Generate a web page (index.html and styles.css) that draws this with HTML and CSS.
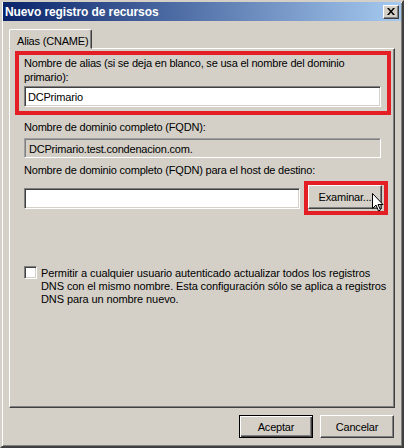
FILE: index.html
```html
<!DOCTYPE html>
<html lang="es">
<head>
  <meta charset="UTF-8" />
  <title>Nuevo registro de recursos</title>
  <link rel="stylesheet" href="styles.css">
</head>
<body>
  <div class="window">
    <div class="titlebar">
      <span class="title">Nuevo registro de recursos</span>
      <button class="close">
        <svg width="8" height="7" viewBox="0 0 8 7"><path d="M0 0h2l2 2.5L6 0h2L5 3.5 8 7H6L4 4.5 2 7H0l3-3.5z" fill="#000"/></svg>
      </button>
    </div>

    <div class="content">
      <div class="tabs">
        <div class="tab">Alias (CNAME)</div>
      </div>

      <div class="panel">
        <div class="highlight alias-group">
          <label>Nombre de alias (si se deja en blanco, se usa el nombre del dominio<br>primario):</label>
          <div class="field">DCPrimario</div>
        </div>

        <label class="label">Nombre de dominio completo (FQDN):</label>
        <div class="field readonly">DCPrimario.test.condenacion.com.</div>

        <label class="label">Nombre de dominio completo (FQDN) para el host de destino:</label>
        <div class="browse-row">
          <div class="field"></div>
          <div class="highlight browse-box">
            <button class="btn">Examinar...</button>
            <svg class="cursor" width="12" height="20" viewBox="0 0 12 20"><path d="M0.5 0.5v15l3.5-3.5 2.5 6 2-1-2.5-5.5h5z" fill="#fff" stroke="#000" stroke-width="1" stroke-linejoin="miter"/></svg>
          </div>
        </div>

        <div class="check-row">
          <span class="checkbox"></span>
          <span class="check-text">Permitir a cualquier usuario autenticado actualizar todos los registros<br>DNS con el mismo nombre. Esta configuración sólo se aplica a registros<br>DNS para un nombre nuevo.</span>
        </div>
      </div>

      <div class="actions">
        <button class="btn default">Aceptar</button>
        <button class="btn">Cancelar</button>
      </div>
    </div>
  </div>
</body>
</html>
```

FILE: styles.css
```css
body {
  margin: 0;
  font-family: 'Liberation Sans', Arial, sans-serif;
  font-size: 11px;
  letter-spacing: -0.2px;
  color: #000;
  background: #d4d0c8;
}
.window {
  width: 404px;
  height: 448px;
  box-sizing: border-box;
  border: 2px solid;
  border-color: #d4d0c8 #404040 #404040 #d4d0c8;
  box-shadow: inset 1px 1px #fff, inset -1px -1px #808080;
  padding: 0 1px 1px 1px;
  background: #d4d0c8;
  display: flex;
  flex-direction: column;
}
.titlebar {
  height: 19px;
  display: flex;
  align-items: center;
  justify-content: space-between;
  padding: 0 2px 0 2px;
  background: linear-gradient(90deg, #0a246a, #a6caf0);
}
.title {
  color: #fff;
  font-weight: bold;
  font-size: 12px;
  letter-spacing: -0.1px;
}
.close {
  width: 16px;
  height: 14px;
  padding: 0;
  display: flex;
  align-items: center;
  justify-content: center;
  background: #d4d0c8;
  border: 1px solid;
  border-color: #fff #404040 #404040 #fff;
  box-shadow: inset -1px -1px #808080;
}
.content {
  flex: 1;
  padding: 8px 6px 0 6px;
  display: flex;
  flex-direction: column;
}
.tabs {
  display: flex;
}
.tab {
  position: relative;
  z-index: 1;
  height: 20px;
  box-sizing: border-box;
  width: 83px;
  margin-bottom: -1px;
  padding: 5px 0 0 7px;
  background: #d4d0c8;
  border: 1px solid;
  border-color: #fff #404040 #d4d0c8 #fff;
  border-radius: 2px 2px 0 0;
  box-shadow: inset -1px 0 #808080;
}
.panel {
  height: 360px;
  box-sizing: border-box;
  padding: 2px 13px 0 14px;
  border: 1px solid;
  border-color: #fff #404040 #404040 #fff;
  box-shadow: inset -1px -1px #808080;
  display: flex;
  flex-direction: column;
}
.highlight {
  border: 4px solid #e31e24;
}
.alias-group {
  margin: 0 -10px 0 -9px;
  padding: 1px 6px 4px 5px;
  display: flex;
  flex-direction: column;
}
.alias-group label,
.label,
.check-text {
  line-height: 14px;
  white-space: nowrap;
}
.alias-group .field {
  margin-top: 2px;
}
.label {
  margin-top: 5px;
}
.field {
  height: 21px;
  box-sizing: border-box;
  padding: 4px 0 0 3px;
  background: #fff;
  border: 1px solid;
  border-color: #808080 #fff #fff #808080;
  box-shadow: inset 1px 1px #404040, inset -1px -1px #d4d0c8;
}
.readonly {
  height: 20px;
  margin-top: 4px;
  padding-left: 4px;
  background: #d4d0c8;
  border-color: #a0a0a0 #fff #fff #a0a0a0;
  box-shadow: inset 1px 1px #808080;
}
.browse-row {
  margin-top: 4px;
  display: flex;
  align-items: center;
  gap: 4px;
  margin-right: -7px;
}
.browse-row .field {
  flex: 1;
}
.browse-box {
  position: relative;
  padding: 0 2px 2px 0;
}
.btn {
  height: 24px;
  width: 74px;
  padding: 0;
  font-family: inherit;
  font-size: 11px;
  letter-spacing: inherit;
  color: #000;
  background: #d4d0c8;
  border: 1px solid;
  border-color: #fff #404040 #404040 #fff;
  box-shadow: inset -1px -1px #808080;
  display: block;
}
.cursor {
  position: absolute;
  left: 64px;
  top: 8px;
}
.check-row {
  margin-top: 51px;
  display: flex;
  gap: 4px;
}
.checkbox {
  width: 13px;
  height: 13px;
  flex: none;
  box-sizing: border-box;
  background: #fff;
  border: 1px solid;
  border-color: #808080 #fff #fff #808080;
  box-shadow: inset 1px 1px #404040, inset -1px -1px #d4d0c8;
}
.check-text {
  line-height: 13px;
  margin-top: 1px;
  letter-spacing: -0.1px;
}
.actions {
  margin-top: 7px;
  display: flex;
  justify-content: flex-end;
  gap: 7px;
  padding-right: 1px;
}
.actions .btn {
  height: 23px;
  width: 74px;
}
.btn.default {
  border-color: #000;
  box-shadow: inset 1px 1px #fff, inset -1px -1px #404040, inset -2px -2px #808080;
}
```
